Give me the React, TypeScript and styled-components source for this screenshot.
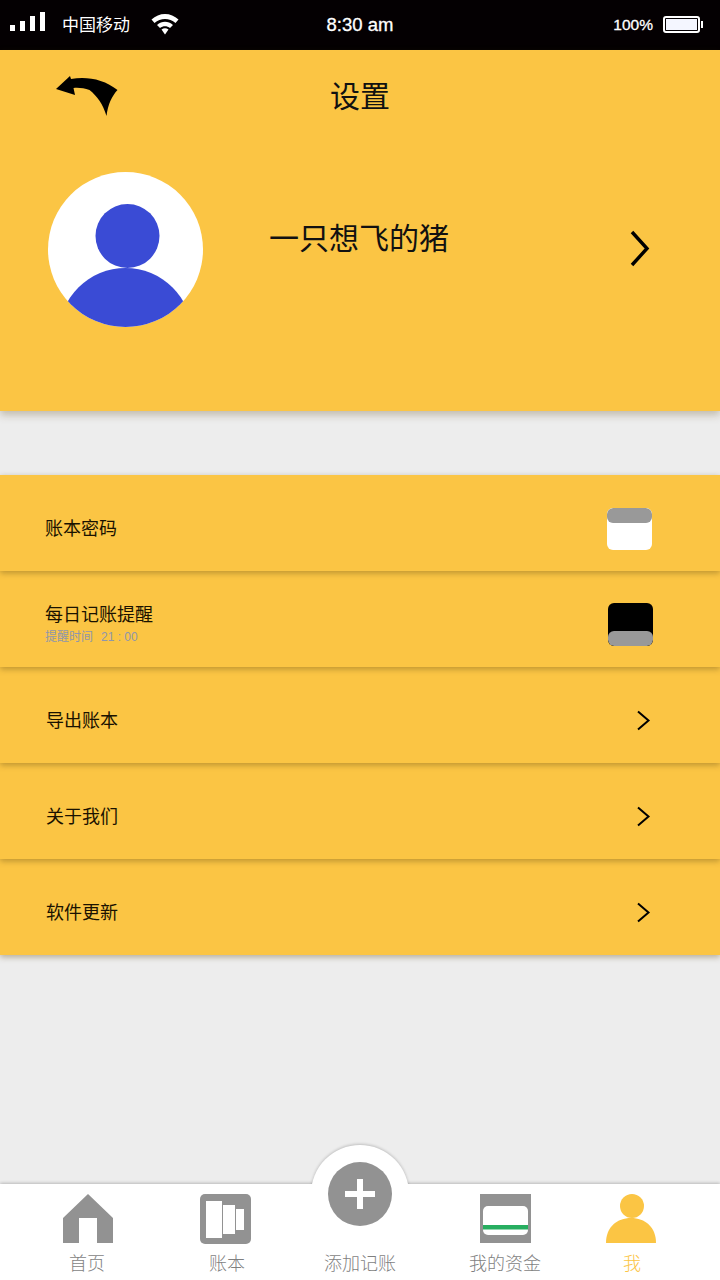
import React from "react";
import styled, { createGlobalStyle } from "styled-components";

const GlobalStyle = createGlobalStyle`
  html, body {
    margin: 0;
    padding: 0;
    background: #ededed;
    font-family: "Liberation Sans", "Noto Sans CJK SC", sans-serif;
  }
`;

const rows = [
  { label: "账本密码", kind: "off" },
  { label: "每日记账提醒", sub: "提醒时间", time: "21 : 00", kind: "on" },
  { label: "导出账本", kind: "link" },
  { label: "关于我们", kind: "link" },
  { label: "软件更新", kind: "link" },
];

const Chevron = ({ size }: { size: "big" | "small" }) =>
  size === "big" ? (
    <svg width="20" height="37" viewBox="0 0 20 37">
      <path d="M2 2 L17 18.5 L2 35" fill="none" stroke="#000" strokeWidth="3.4" />
    </svg>
  ) : (
    <svg width="15" height="21" viewBox="0 0 15 21">
      <path d="M2 1.5 L12.5 10.5 L2 19.5" fill="none" stroke="#000" strokeWidth="2" />
    </svg>
  );

const App = () => {
  return (
    <Page>
      <GlobalStyle />
      <StatusBar>
        <StatusLeft>
          <svg width="35" height="20" viewBox="0 0 35 20">
            <rect x="0" y="13" width="5" height="6" fill="#fff" />
            <rect x="10" y="9" width="5" height="10" fill="#fff" />
            <rect x="20" y="4" width="5" height="15" fill="#fff" />
            <rect x="30" y="0" width="5" height="19" fill="#fff" />
          </svg>
          <Carrier>中国移动</Carrier>
          <svg width="28" height="23" viewBox="0 0 28 23">
            <path d="M0.5 7.5 C8 0 20 0 27.5 7.5 L24.5 11 C18.5 5.5 9.5 5.5 3.5 11 Z" fill="#fff" />
            <path d="M6 13 C11 8.8 17 8.8 22 13 L19 16 C16 13.6 12 13.6 9 16 Z" fill="#fff" />
            <path d="M10.5 17.5 C12.8 15.8 15.2 15.8 17.5 17.5 L14 22.5 Z" fill="#fff" />
          </svg>
        </StatusLeft>
        <Clock>8:30 am</Clock>
        <StatusRight>
          <Percent>100%</Percent>
          <Battery>
            <BatteryFill />
          </Battery>
        </StatusRight>
      </StatusBar>

      <Header>
        <NavRow>
          <BackButton>
            <svg width="62" height="40" viewBox="0 0 62 40">
              <path
                d="M0 13 L14 0 L15 3 C30 0 48 3 61.5 14 C56 20 52 28 50.5 40 C47 28 41 20 33.5 14 C28 12 22 11.5 17.5 12 L19 19 Z"
                fill="#000"
              />
            </svg>
          </BackButton>
          <Title>设置</Title>
        </NavRow>
        <Profile>
          <Avatar>
            <svg width="155" height="155" viewBox="0 0 155 155">
              <defs>
                <clipPath id="avatarClip">
                  <circle cx="77.5" cy="77.5" r="77.5" />
                </clipPath>
              </defs>
              <circle cx="77.5" cy="77.5" r="77.5" fill="#fff" />
              <circle cx="79.5" cy="64" r="32" fill="#3a4bd5" />
              <circle cx="77.5" cy="162.6" r="66.6" fill="#3a4bd5" clipPath="url(#avatarClip)" />
            </svg>
          </Avatar>
          <UserName>一只想飞的猪</UserName>
          <ProfileArrow>
            <Chevron size="big" />
          </ProfileArrow>
        </Profile>
      </Header>

      <RowList>
        {rows.map((row) => (
          <Row key={row.label} $link={row.kind === "link"}>
            <RowText $link={row.kind === "link"}>
              <RowLabel>{row.label}</RowLabel>
              {row.sub && (
                <RowSub>
                  {row.sub}
                  <RowTime>{row.time}</RowTime>
                </RowSub>
              )}
            </RowText>
            {row.kind === "link" ? (
              <Chevron size="small" />
            ) : (
              <Toggle $on={row.kind === "on"}>
                <Knob />
              </Toggle>
            )}
          </Row>
        ))}
      </RowList>

      <TabBar>
        <Hump />
        <TabItem>
          <TabIcon $nudge={2} width="50" height="50" viewBox="0 0 50 50">
            <path d="M25 0 L50 24 L50 49 L34 49 L34 24 L16 24 L16 49 L0 49 L0 24 Z" fill="#929292" />
          </TabIcon>
          <TabLabel>首页</TabLabel>
        </TabItem>
        <TabItem>
          <TabIcon $nudge={-4} width="51" height="50" viewBox="0 0 51 50">
            <rect width="51" height="50" rx="5" fill="#929292" />
            <rect x="6" y="7" width="16" height="37" fill="#fff" />
            <rect x="23" y="11" width="12" height="29" fill="#fff" />
            <rect x="36" y="15" width="8" height="21" fill="#fff" />
          </TabIcon>
          <TabLabel>账本</TabLabel>
        </TabItem>
        <TabItem>
          <FabIcon>
            <svg width="64" height="64" viewBox="0 0 64 64">
              <circle cx="32" cy="32" r="32" fill="#929292" />
              <rect x="17" y="29" width="30" height="6" fill="#fff" />
              <rect x="29" y="17" width="6" height="30" fill="#fff" />
            </svg>
          </FabIcon>
          <TabLabel>添加记账</TabLabel>
        </TabItem>
        <TabItem>
          <TabIcon width="51" height="50" viewBox="0 0 51 50">
            <rect y="0" width="51" height="49" fill="#929292" />
            <rect x="3" y="12" width="45" height="29" rx="5" fill="#fff" />
            <rect x="3" y="31" width="45" height="4.5" fill="#27ae60" />
          </TabIcon>
          <TabLabel>我的资金</TabLabel>
        </TabItem>
        <TabItem>
          <TabIcon $nudge={-2} width="50" height="50" viewBox="0 0 50 50">
            <circle cx="26" cy="12" r="12" fill="#fbc544" />
            <path d="M0 49 C0 33 11 24 25 24 C39 24 50 33 50 49 Z" fill="#fbc544" />
          </TabIcon>
          <TabLabel $active>我</TabLabel>
        </TabItem>
      </TabBar>
    </Page>
  );
};

const Page = styled.div`
  width: 720px;
  height: 1280px;
  display: flex;
  flex-direction: column;
  overflow: hidden;
  background: #ededed;
`;

const StatusBar = styled.div`
  height: 50px;
  flex: none;
  background: #040002;
  color: #fff;
  display: grid;
  grid-template-columns: 1fr auto 1fr;
  align-items: center;
  padding: 0 10px;
  box-sizing: border-box;
`;

const StatusLeft = styled.div`
  display: flex;
  align-items: center;
  gap: 17px;
  svg:first-child {
    margin-top: -6px;
  }
  svg:last-child {
    margin-left: 4px;
    margin-top: -4px;
  }
`;

const Carrier = styled.span`
  font-size: 17px;
  margin-top: -3px;
`;

const Clock = styled.span`
  font-size: 18.5px;
  margin-top: -1px;
  -webkit-text-stroke: 0.3px #fff;
`;

const StatusRight = styled.div`
  display: flex;
  align-items: center;
  justify-content: flex-end;
  gap: 10px;
  padding-right: 10px;
`;

const Percent = styled.span`
  font-size: 15.5px;
  -webkit-text-stroke: 0.3px #fff;
`;

const Battery = styled.div`
  width: 37px;
  height: 17px;
  border: 2px solid #fff;
  border-radius: 3px;
  box-sizing: border-box;
  padding: 1px;
  position: relative;
  margin-top: -1px;
  &::after {
    content: "";
    position: absolute;
    right: -5px;
    top: 3px;
    width: 2px;
    height: 7px;
    background: #fff;
  }
`;

const BatteryFill = styled.div`
  height: 100%;
  background: #f4f6ff;
`;

const Header = styled.div`
  height: 361px;
  flex: none;
  background: #fbc544;
  box-shadow: 0 4px 8px rgba(90, 70, 20, 0.3);
  position: relative;
  z-index: 2;
`;

const NavRow = styled.div`
  display: grid;
  grid-template-columns: 1fr auto 1fr;
  align-items: center;
  padding: 26px 0 0 56px;
  height: 96px;
  box-sizing: border-box;
  align-content: start;
`;

const BackButton = styled.div`
  height: 40px;
`;

const Title = styled.h1`
  margin: 0 0 -2px;
  font-size: 30px;
  font-weight: 400;
  line-height: 40px;
  color: #111;
  position: relative;
  left: -28px;
`;

const Profile = styled.div`
  display: flex;
  align-items: flex-start;
  padding: 26px 70px 0 48px;
`;

const Avatar = styled.div`
  width: 155px;
  height: 155px;
  flex: none;
`;

const UserName = styled.div`
  margin: 45px 0 0 66px;
  font-size: 30px;
  line-height: 44px;
  color: #111;
  flex: 1;
`;

const ProfileArrow = styled.div`
  margin: 58px 0 0 0;
`;

const RowList = styled.div`
  margin-top: 64px;
  display: flex;
  flex-direction: column;
`;

const Row = styled.div<{ $link: boolean }>`
  height: 96px;
  background: #fbc544;
  display: flex;
  align-items: center;
  justify-content: space-between;
  padding: ${(p) => (p.$link ? "10px 69px 0 45px" : "12px 68px 0 45px")};
  box-sizing: border-box;
  box-shadow: 0 2px 6px rgba(90, 70, 20, 0.4);
  position: relative;
  &:nth-child(1) { z-index: 5; }
  &:nth-child(2) { z-index: 4; }
  &:nth-child(3) { z-index: 3; }
  &:nth-child(4) { z-index: 2; }
  &:nth-child(5) { z-index: 1; }
`;

const RowText = styled.div<{ $link: boolean }>`
  display: flex;
  flex-direction: column;
  margin: ${(p) => (p.$link ? "2px 0 0 1px" : "0")};
`;

const RowLabel = styled.div`
  font-size: 18px;
  line-height: 24px;
  color: #1a1200;
`;

const RowSub = styled.div`
  margin: 2px 0;
  font-size: 12px;
  line-height: 16px;
  color: #8f96ac;
`;

const RowTime = styled.span`
  margin-left: 8px;
`;

const Toggle = styled.div<{ $on: boolean }>`
  width: 45px;
  height: ${(p) => (p.$on ? 43 : 42)}px;
  border-radius: 6px;
  display: flex;
  align-items: ${(p) => (p.$on ? "flex-end" : "flex-start")};
  background: ${(p) => (p.$on ? "#000" : "#fff")};
  margin-right: ${(p) => (p.$on ? -1 : 0)}px;
  margin-bottom: ${(p) => (p.$on ? 2 : 1)}px;
  overflow: hidden;
`;

const Knob = styled.div`
  width: 100%;
  height: 15px;
  background: #999;
  border-radius: 6px;
`;

const TabBar = styled.div`
  margin-top: auto;
  height: 96px;
  flex: none;
  background: #fff;
  box-shadow: 0 -1px 3px rgba(0, 0, 0, 0.22);
  display: grid;
  grid-template-columns: 174px 106px 160px 130px 124px;
  padding-top: 10px;
  box-sizing: border-box;
  position: relative;
`;

const Hump = styled.div`
  position: absolute;
  left: 311px;
  top: -39px;
  width: 98px;
  height: 98px;
  border-radius: 50%;
  background: #fff;
  box-shadow: 0 -1px 3px rgba(0, 0, 0, 0.2);
  clip-path: inset(-6px -6px 59px -6px);
`;

const TabItem = styled.div`
  display: flex;
  flex-direction: column;
  align-items: center;
  position: relative;
`;

const TabIcon = styled.svg<{ $nudge?: number }>`
  margin-left: ${(p) => Math.max(p.$nudge ?? 0, 0)}px;
  margin-right: ${(p) => Math.max(-(p.$nudge ?? 0), 0)}px;
`;

const FabIcon = styled.div`
  height: 64px;
  margin: -32px 0 18px;
`;

const TabLabel = styled.span<{ $active?: boolean }>`
  margin-top: 5px;
  font-family: "Noto Sans CJK SC", sans-serif;
  font-weight: 300;
  font-size: 18px;
  line-height: 26px;
  color: ${(p) => (p.$active ? "#fbc544" : "#7f7f7f")};
`;

export default App;
